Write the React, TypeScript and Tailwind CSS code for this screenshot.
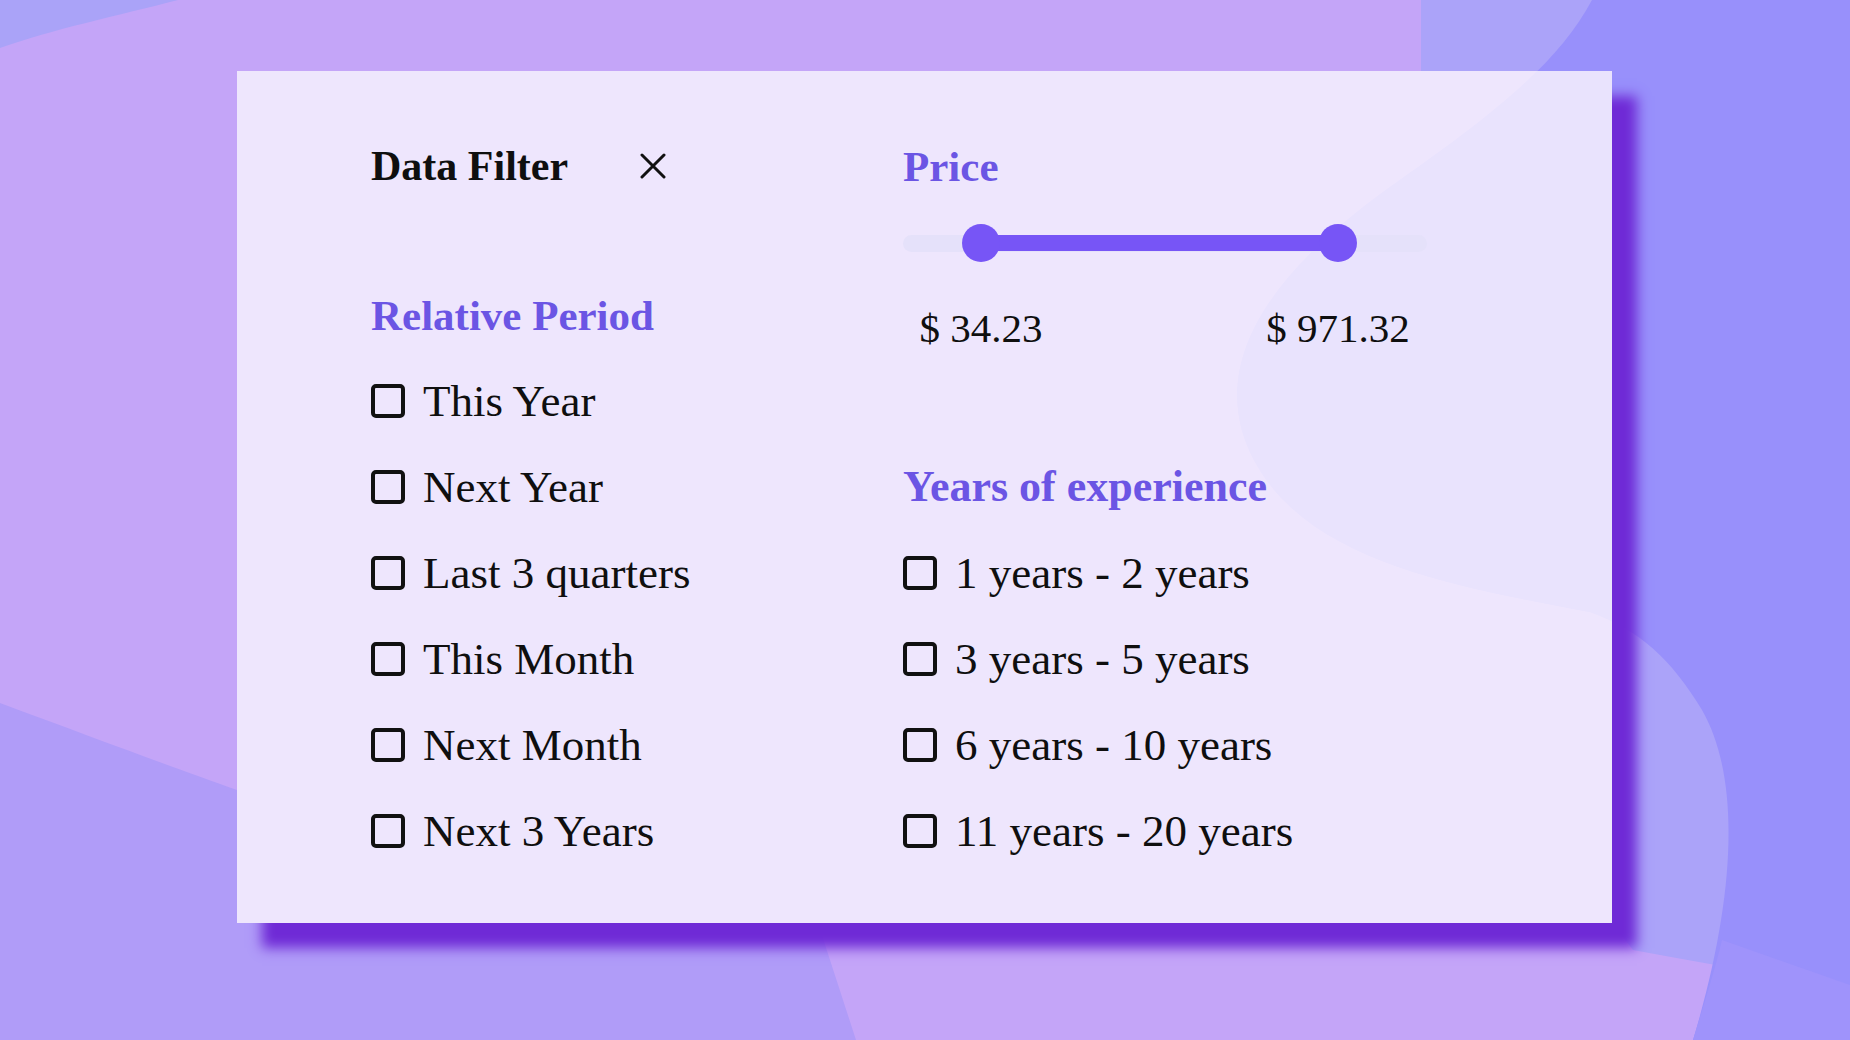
import React from "react";

const serif = { fontFamily: '"Liberation Serif", "Times New Roman", serif' };

function Box() {
  return <div className="w-[34px] h-[34px] shrink-0 rounded-[5px] border-[4px] border-[#111111]" />;
}

function Row({ label }: { label: string }) {
  return (
    <div className="h-[86px] flex items-center gap-[18px]">
      <Box />
      <span className="text-[45px] text-[#0f0f0f] whitespace-nowrap leading-none">{label}</span>
    </div>
  );
}

const DARK =
  "M1592,0 L1850,0 L1850,1040 L1693,1040 C1735,900 1742,780 1702,710 C1672,660 1640,630 1590,612 C1450,585 1290,560 1245,440 C1210,340 1300,250 1400,180 C1500,110 1560,60 1592,0 Z";

export default function App() {
  const left = ["This Year", "Next Year", "Last 3 quarters", "This Month", "Next Month", "Next 3 Years"];
  const right = ["1 years - 2 years", "3 years - 5 years", "6 years - 10 years", "11 years - 20 years"];
  return (
    <div className="relative w-[1850px] h-[1040px] overflow-hidden pl-[237px] pt-[71px]" style={serif}>
      <svg className="absolute inset-0 w-full h-full" viewBox="0 0 1850 1040" preserveAspectRatio="none">
        <defs>
          <clipPath id="cardclip">
            <rect x="237" y="71" width="1375" height="852" />
          </clipPath>
        </defs>
        <rect width="1850" height="1040" fill="#c4a5f8" />
        <path d="M0,0 L178,0 C120,15 50,30 0,48 Z" fill="#aaa3f8" />
        <path d="M0,703 C100,740 180,770 237,790 L237,923 L818,923 L856,1040 L0,1040 Z" fill="#b09cf8" />
        <path d="M1421,0 L1850,0 L1850,990 C1770,975 1700,962 1633,950 L1612,923 L1612,71 L1421,71 Z" fill="#aba3f9" />
        <path d={DARK} fill="#9890fb" />
        <path d={DARK} fill="#c4a5f8" fillOpacity="0.55" clipPath="url(#cardclip)" />
        <path d="M1722,940 L1850,985 L1850,1040 L1693,1040 C1705,1000 1715,970 1722,940 Z" fill="#9f93fb" />
      </svg>

      <div className="relative w-[1375px] h-[852px] bg-white/[0.72] shadow-[25px_25px_12px_#6f2ad6] flex pl-[134px] pt-[65px]">
        {/* Left column */}
        <div className="w-[532px] flex flex-col">
          <div className="h-[60px] w-[296px] flex items-center justify-between">
            <span className="text-[42px] font-bold text-[#0f0f0f] leading-none">Data Filter</span>
            <svg width="26" height="26" viewBox="0 0 26 26" className="mr-[1px]">
              <path d="M2,2 L24,24 M24,2 L2,24" stroke="#111111" strokeWidth="3" strokeLinecap="round" fill="none" />
            </svg>
          </div>
          <div className="mt-[76px] h-[86px] flex items-center">
            <span className="text-[43px] font-bold text-[#6b55e4] leading-none">Relative Period</span>
          </div>
          {left.map((l) => (
            <Row key={l} label={l} />
          ))}
        </div>

        {/* Right column */}
        <div className="flex flex-col">
          <div className="h-[60px] flex items-center">
            <span className="text-[43px] font-bold text-[#6b55e4] leading-none">Price</span>
          </div>
          <div className="relative mt-[27px] w-[524px] h-[40px] flex items-center">
            <div className="w-full h-[17px] rounded-full bg-[#e5e1fa]" />
            <div className="absolute left-[78px] top-[12px] w-[357px] h-[16px] bg-[#7755f6]" />
            <div className="absolute left-[59px] top-[1px] w-[38px] h-[38px] rounded-full bg-[#7755f6]" />
            <div className="absolute left-[416px] top-[1px] w-[38px] h-[38px] rounded-full bg-[#7755f6]" />
          </div>
          <div className="mt-[35px] h-[60px] flex items-center">
            <div className="w-[156px] text-center text-[41px] text-[#0f0f0f] whitespace-nowrap leading-none">$ 34.23</div>
            <div className="ml-[199px] w-[160px] text-center text-[41px] text-[#0f0f0f] whitespace-nowrap leading-none">$ 971.32</div>
          </div>
          <div className="mt-[86px] h-[86px] flex items-center">
            <span className="text-[44px] font-bold text-[#6b55e4] leading-none whitespace-nowrap">Years of experience</span>
          </div>
          {right.map((l) => (
            <Row key={l} label={l} />
          ))}
        </div>
      </div>
    </div>
  );
}
